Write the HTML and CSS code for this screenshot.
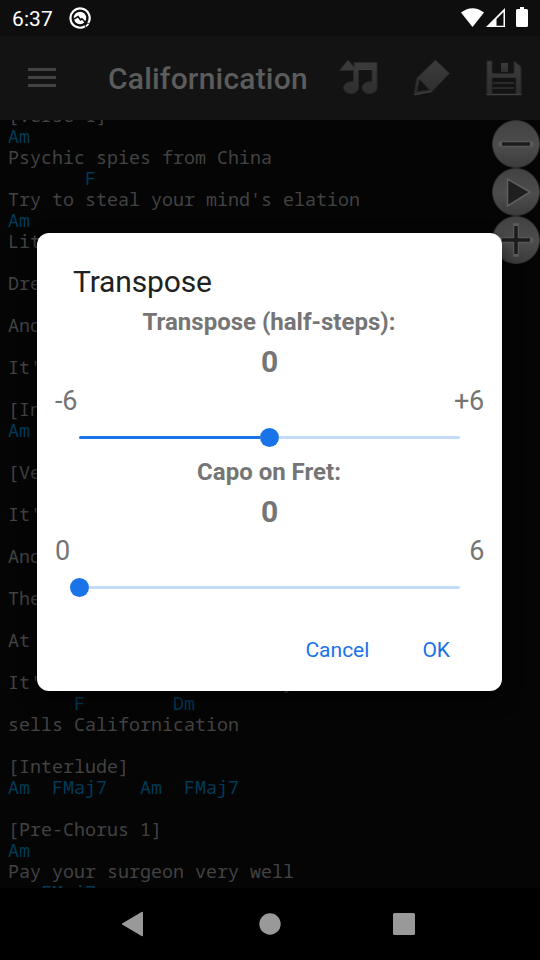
FILE: index.html
```html
<!DOCTYPE html>
<html lang="en">
<head>
<meta charset="utf-8">
<title>Californication</title>
<link rel="stylesheet" href="styles.css">
</head>
<body>
<div class="screen">
  <header class="status">
    <span class="clock">6:37</span>
    <svg class="status-app" width="24" height="24" viewBox="0 0 24 24">
      <path d="M17 20.300A9.600 9.600 0 1 1 20.300 17" fill="none" stroke="#fff" stroke-width="2.200"/>
      <circle cx="12" cy="12" r="6.200" fill="#fff"/>
      <path d="M6 13.200l4-2.700 2.500 3.300 1.500-1 5.500 6" fill="none" stroke="#111" stroke-width="1.600"/>
      <path d="M18 20.300l2.500-2.500" stroke="#fff" stroke-width="1.800"/>
    </svg>
    <svg class="status-icons" width="70" height="22" viewBox="0 0 70 22">
      <path d="M1 5.500Q12.500-3 24 5.500L12.500 20z" fill="#fff"/>
      <path fill-rule="evenodd" d="M26 20L45 1v19zM36.500 12v6.800h7V5z" fill="#fff"/>
      <path d="M56 3.500q0-1.500 1.500-1.500H60V0h4v2h2.500q1.500 0 1.500 1.500v15q0 1.500-1.500 1.500h-9q-1.500 0-1.500-1.500z" fill="#fff"/>
    </svg>
  </header>
  <nav class="toolbar">
    <div class="menu"><i></i><i></i><i></i></div>
    <h1>Californication</h1>
    <svg class="tools" width="200" height="60" viewBox="0 0 200 60">
      <defs>
        <linearGradient id="g" x1="0" y1="0" x2="0" y2="1"><stop offset="0" stop-color="#3c3c3c"/><stop offset="1" stop-color="#2e2e2e"/></linearGradient>
      </defs>
      <g fill="url(#g)" stroke="#282828" stroke-width="1">
        <path d="M9.500 20.500L18 10 24 17V12.500H47V38.500a7.500 6 0 1 1-5-6.500V19.500H28.500V38.500a7.500 6 0 1 1-5-6.500V20.500z"/>
        <path fill-rule="evenodd" d="M105.500 10L119.500 23.500 102 41.500 84 45 87 28zM89.500 29L86.500 42 99.500 40z"/>
        <path fill-rule="evenodd" d="M157 11h5v11q0 1.500 1.500 1.500h19q1.500 0 1.500-1.500V11l7 6v28h-34zM162 27v17h24V27z"/>
        <path d="M171 13h7v9h-7z" stroke="none"/>
      </g>
      <path d="M25 19.500h18M163 33h21M163 38h21M157 44.500h34M84.500 44.500l17.500-3M162 27h24" fill="none" stroke="#404040"/>
    </svg>
  </nav>
  <main class="song">
<pre>[Verse 1]
<b>Am</b>
Psychic spies from China
<b>       F</b>
Try to steal your mind's elation
<b>Am</b>
Lit

Dre

And

It'

[In
<b>Am</b>

[Ve

It'

And

The

At

It'                      y
<b>      F        Dm</b>
sells Californication

[Interlude]
<b>Am  FMaj7   Am  FMaj7</b>

[Pre-Chorus 1]
<b>Am</b>
Pay your surgeon very well
<b>   FMaj7</b></pre>
    <div class="floaters">
      <svg viewBox="0 0 48 48"><use href="#disc"/><path d="M10 24h28" class="halo"/><path d="M10 24h28" class="sign"/></svg>
      <svg viewBox="0 0 48 48"><use href="#disc"/><path d="M15.500 11v27L38 24z" class="play"/></svg>
      <svg viewBox="0 0 48 48"><use href="#disc"/><path d="M10 24h28M24 10v28" class="halo"/><path d="M10 24h28M24 10v28" class="sign"/></svg>
    </div>
    <svg width="0" height="0" class="defs"><defs>
      <linearGradient id="dg" x1="0" y1="0" x2="0" y2="1"><stop offset="0" stop-color="#424242"/><stop offset=".55" stop-color="#4d4d4d"/><stop offset="1" stop-color="#3b3b3b"/></linearGradient>
      <circle id="disc" cx="24" cy="24" r="23.500" fill="url(#dg)" stroke="#333"/>
    </defs></svg>
  </main>
  <footer class="navbar">
    <svg width="540" height="72" viewBox="0 0 540 72" fill="#999">
      <path d="M122.500 35.200L141.500 24q1.500-.8 1.500 1v22q0 1.800-1.500 1L122.500 36.800q-1.200-.8 0-1.600z"/>
      <circle cx="270" cy="36" r="10.700"/>
      <rect x="393" y="25" width="22" height="22" rx="1.500"/>
    </svg>
  </footer>
</div>
<section class="dialog">
  <h2>Transpose</h2>
  <div class="control">
    <h3>Transpose (half-steps):</h3>
    <strong>0</strong>
    <div class="range"><span>-6</span><span>+6</span></div>
    <div class="slider"><div class="fill half"></div><div class="thumb"></div><div class="rest"></div></div>
  </div>
  <div class="control">
    <h3>Capo on Fret:</h3>
    <strong>0</strong>
    <div class="range"><span>0</span><span>6</span></div>
    <div class="slider"><div class="fill"></div><div class="thumb"></div><div class="rest"></div></div>
  </div>
  <div class="actions"><a>Cancel</a><a>OK</a></div>
</section>
</body>
</html>
```
FILE: styles.css
```css
* { box-sizing: border-box; margin: 0; padding: 0; }
body { width: 540px; height: 960px; overflow: hidden; background: #000; font-family: Roboto, sans-serif; }
.screen { display: flex; flex-direction: column; height: 960px; }
.status { height: 36px; display: flex; align-items: center; padding: 0 10px 0 12px; background: #0e0e0e; color: #fff; }
.clock { font-size: 21px; line-height: 36px; padding-top: 1px; width: 56px; letter-spacing: .1px; }
.status-icons { margin: 0 0 0 auto; }
.toolbar { height: 84px; display: flex; align-items: center; background: #131313; padding: 0 10px 0 28px; }
.menu { width: 28px; display: grid; gap: 5px; margin-top: -1px; }
.menu i { height: 3px; background: #424242; }
h1 { font-size: 30px; font-weight: 500; line-height: 36px; letter-spacing: .2px; color: #5c5c5c; margin: 2px 0 0 52px; width: 222px; }
.tools { flex: none; margin-top: 4px; }
.song { position: relative; height: 768px; overflow: hidden; background: #050505; }
pre { margin: -16px 0 0 8px; font: 18.33px/21px "Noto Sans Mono", "DejaVu Sans Mono", monospace; color: #424242; }
pre b { font-weight: 400; color: #003a57; }
.floaters { position: absolute; top: 0; right: 0; width: 48px; display: grid; }
.floaters svg { width: 48px; height: 48px; }
.defs { position: absolute; }
.halo { fill: none; stroke: #5c5c5c; stroke-width: 5.5; stroke-linecap: square; }
.sign { fill: none; stroke: #1c1c1c; stroke-width: 3.5; }
.play { fill: #1f1f1f; stroke: #606060; stroke-width: 1.5; }
.navbar { height: 72px; background: #000; }
.navbar svg { display: block; }
.dialog { position: absolute; left: 37px; top: 233px; width: 465px; height: 458px; border-radius: 12px; background: #fff; color: #757575; padding: 28px 18px 0; box-shadow: 0 8px 18px rgba(0, 0, 0, .5); }
h2 { font-size: 30px; font-weight: 400; line-height: 42px; letter-spacing: -.15px; color: #212121; padding-left: 18px; }
.control { height: 150px; padding-top: 1px; text-align: center; }
h3 { font-size: 24px; font-weight: 700; line-height: 36px; margin-left: -1px; }
strong { display: block; font-size: 30px; font-weight: 700; line-height: 44px; }
.range { display: flex; justify-content: space-between; font-size: 27px; line-height: 35px; letter-spacing: -.3px; }
.slider { display: flex; align-items: center; height: 19px; margin: 9px 24px 0 15px; }
.fill { height: 3px; background: #1a73e8; }
.half { width: 181px; margin-left: 9px; border-radius: 2px 0 0 2px; }
.thumb { width: 19px; height: 19px; border-radius: 50%; background: #1a73e8; }
.rest { flex: 1; height: 3px; background: #c4dbf9; border-radius: 0 2px 2px 0; }
.actions { display: flex; justify-content: flex-end; gap: 53px; padding: 29px 34px 0 0; font-size: 21px; line-height: 36px; color: #1a73e8; }
```
